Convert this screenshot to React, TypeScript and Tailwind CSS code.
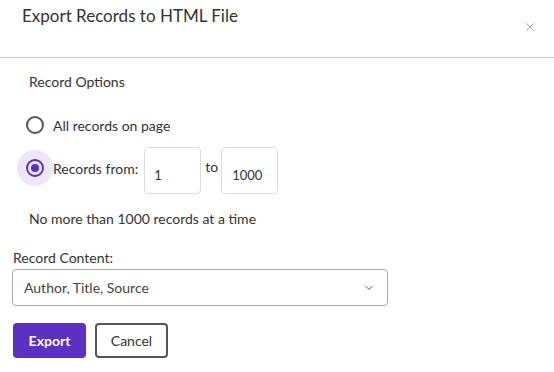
import { X, ChevronDown } from 'lucide-react';

function Radio({ checked }: { checked?: boolean }) {
  return (
    <span
      className={`w-9 h-9 rounded-full flex items-center justify-center shrink-0 ${
        checked ? 'bg-[#ece6f7]' : ''
      }`}
    >
      <span
        className={`w-[18px] h-[18px] rounded-full border-2 flex items-center justify-center ${
          checked ? 'border-[#5b30c3]' : 'border-[#555]'
        }`}
      >
        {checked && <span className="w-2 h-2 rounded-full bg-[#5b30c3]" />}
      </span>
    </span>
  );
}

export default function App() {
  return (
    <div
      className="w-[554px] h-[372px] bg-white text-[#333] overflow-hidden"
      style={{ fontFamily: 'Lato, "Liberation Sans", sans-serif' }}
    >
      {/* Header */}
      <div className="h-[58px] border-b border-[#c8c8c8] flex justify-between">
        <h2 className="pl-[22px] pt-[4px] text-[17px] text-[#333] leading-[24px]">
          Export Records to HTML File
        </h2>
        <button className="mr-[16px] mt-[19px] h-4 w-4 flex items-center justify-center text-[#999]">
          <X className="w-[14px] h-[14px]" strokeWidth={1.5} />
        </button>
      </div>

      {/* Body */}
      <div className="px-[13px]">
        <p className="pl-4 pt-[14px] text-[14px] leading-[20px]">Record Options</p>

        <div className="pl-1 mt-[15px] flex items-center">
          <Radio />
          <span className="text-[14px]">All records on page</span>
        </div>

        <div className="pl-1 mt-[4px] flex items-start">
          <span className="mt-[3px]">
            <Radio checked />
          </span>
          <span className="text-[14px] mt-[11px]">Records from:</span>
          <div className="ml-[6px] w-[57px] h-[47px] border border-[#dcdcdc] rounded-[4px] flex items-end px-[9px] pb-[8px] text-[13px]">
            1
          </div>
          <span className="ml-[4px] mr-[3px] text-[14px] mt-[9px]">to</span>
          <div className="w-[57px] h-[47px] border border-[#dcdcdc] rounded-[4px] flex items-end px-[10px] pb-[8px] text-[13px]">
            1000
          </div>
        </div>

        <p className="pl-4 mt-[15px] text-[14px] leading-[20px]">No more than 1000 records at a time</p>

        <label className="block mt-[19px] text-[14px] leading-[20px]">Record Content:</label>
        <div className="mt-[1px] w-[376px] h-[37px] ml-[-1px] border border-[#aaa] rounded-[4px] flex items-center justify-between pl-[11px] pr-[12px] text-[14px] text-[#444]">
          <span>Author, Title, Source</span>
          <ChevronDown className="w-3 h-3 text-[#555]" strokeWidth={2} />
        </div>

        <div className="mt-[17px] flex gap-[9px]">
          <button className="w-[73px] h-[35px] rounded-[4px] bg-[#5b30c3] text-white font-bold text-[14px]">
            Export
          </button>
          <button className="w-[73px] h-[35px] rounded-[4px] border-2 border-[#555] text-[#333] text-[14px]">
            Cancel
          </button>
        </div>
      </div>
    </div>
  );
}
